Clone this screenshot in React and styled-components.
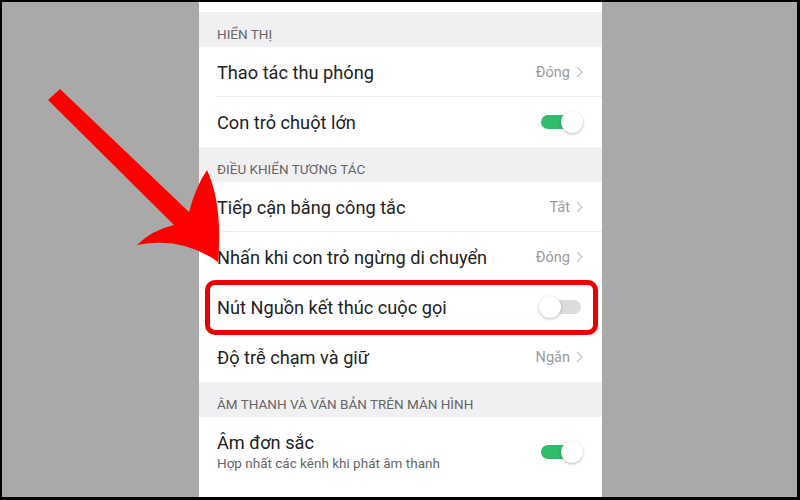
import React from 'react'
import styled, { createGlobalStyle } from 'styled-components'

const GlobalStyle = createGlobalStyle`
  html, body {
    margin: 0;
    padding: 0;
    background: #a9a9a9;
  }
  body {
    font-family: Roboto, "Noto Sans", "Liberation Sans", sans-serif;
  }
`

const Stage = styled.div`
  position: relative;
  box-sizing: border-box;
  width: 800px;
  height: 500px;
  overflow: hidden;
  background: #a9a9a9;
  border-style: solid;
  border-color: #000;
  border-width: 2px 3px 3px 2px;
  display: flex;
  align-items: flex-start;
  padding-left: 197px;
`

const Panel = styled.div`
  width: 403px;
  height: 100%;
  background: #f0f0f2;
  display: flex;
  flex-direction: column;
  flex-shrink: 0;

  & > * {
    flex-shrink: 0;
  }
`

const TopGap = styled.div`
  height: 10px;
  background: #fff;
`

const SectionHeader = styled.div`
  height: 35px;
  box-sizing: border-box;
  display: flex;
  align-items: flex-end;
  padding: 0 0 5px 18px;
  font-size: 13.5px;
  color: #666;
`

const Group = styled.div`
  background: #fff;
  display: flex;
  flex-direction: column;

  & > * {
    flex-shrink: 0;
  }
`

const Row = styled.div`
  position: relative;
  box-sizing: border-box;
  height: ${p => (p.$tall ? 69 : 50)}px;
  display: flex;
  align-items: center;
  justify-content: space-between;
  padding: 0 19px 0 18px;

  & + &::before {
    content: '';
    position: absolute;
    top: -1px;
    left: 17px;
    right: 0;
    height: 1px;
    background: #ececee;
  }
`

const Texts = styled.div`
  display: flex;
  flex-direction: column;
  gap: 2px;
`

const Title = styled.div`
  font-size: 18.2px;
  color: #222;
`

const Sub = styled.div`
  font-size: 13.5px;
  color: #666;
`

const Value = styled.div`
  display: flex;
  align-items: center;
  gap: 6px;
  font-size: 14.5px;
  color: #9a9a9a;
`

const Chevron = () => (
  <svg width="7" height="12" viewBox="0 0 7 12">
    <path d="M1 1 L6 6 L1 11" fill="none" stroke="#c4c4c4" strokeWidth="1.2" />
  </svg>
)

const Toggle = styled.div`
  position: relative;
  width: 44px;
  height: 22px;
  flex-shrink: 0;

  &::before {
    content: '';
    position: absolute;
    left: 2px;
    right: 2px;
    top: 4px;
    height: 14px;
    border-radius: 7px;
    background: ${p => (p.$on ? '#2fbd6c' : '#dcdcdc')};
  }
  &::after {
    content: '';
    position: absolute;
    top: 0;
    ${p => (p.$on ? 'right: 0;' : 'left: 0;')}
    width: 22px;
    height: 22px;
    border-radius: 50%;
    background: #fff;
    box-shadow: 0 1px 3px rgba(0, 0, 0, 0.28);
  }
`

const Highlight = styled.div`
  position: absolute;
  left: 6px;
  right: 4px;
  top: -2px;
  bottom: -3px;
  border: 5px solid #ee0000;
  border-radius: 10px;
  pointer-events: none;
  z-index: 1;
`

const ArrowLayer = styled.svg`
  position: absolute;
  left: 0;
  top: 0;
  pointer-events: none;
`

const Arrow = () => (
  <ArrowLayer width="800" height="500" viewBox="2 2 800 500">
    <path
      d="M48 100 L60 89 L189 212 Q196 186 207 170 Q223 205 218 262 Q182 236 137 245 Q152 230 174 225 Z"
      fill="#fe0000"
    />
  </ArrowLayer>
)

const display = [
  { title: 'Thao tác thu phóng', value: 'Đóng' },
  { title: 'Con trỏ chuột lớn', toggle: true, on: true },
]

const interaction = [
  { title: 'Tiếp cận bằng công tắc', value: 'Tắt' },
  { title: 'Nhấn khi con trỏ ngừng di chuyển', value: 'Đóng' },
  { title: 'Nút Nguồn kết thúc cuộc gọi', toggle: true, on: false, marked: true },
  { title: 'Độ trễ chạm và giữ', value: 'Ngắn' },
]

const audio = [
  { title: 'Âm đơn sắc', sub: 'Hợp nhất các kênh khi phát âm thanh', toggle: true, on: true },
  { title: '' },
]

function SettingRow({ item }) {
  return (
    <Row $tall={!!item.sub}>
      <Texts>
        <Title>{item.title}</Title>
        {item.sub && <Sub>{item.sub}</Sub>}
      </Texts>
      {item.value && (
        <Value>
          {item.value}
          <Chevron />
        </Value>
      )}
      {item.toggle && <Toggle $on={item.on} />}
      {item.marked && <Highlight />}
    </Row>
  )
}

export default function App() {
  return (
    <>
      <GlobalStyle />
      <Stage>
        <Panel>
          <TopGap />
          <SectionHeader>HIỂN THỊ</SectionHeader>
          <Group>
            {display.map(item => <SettingRow key={item.title} item={item} />)}
          </Group>
          <SectionHeader>ĐIỀU KHIỂN TƯƠNG TÁC</SectionHeader>
          <Group>
            {interaction.map(item => <SettingRow key={item.title} item={item} />)}
          </Group>
          <SectionHeader>ÂM THANH VÀ VĂN BẢN TRÊN MÀN HÌNH</SectionHeader>
          <Group>
            {audio.map(item => <SettingRow key={item.title || 'next'} item={item} />)}
          </Group>
        </Panel>
        <Arrow />
      </Stage>
    </>
  )
}
